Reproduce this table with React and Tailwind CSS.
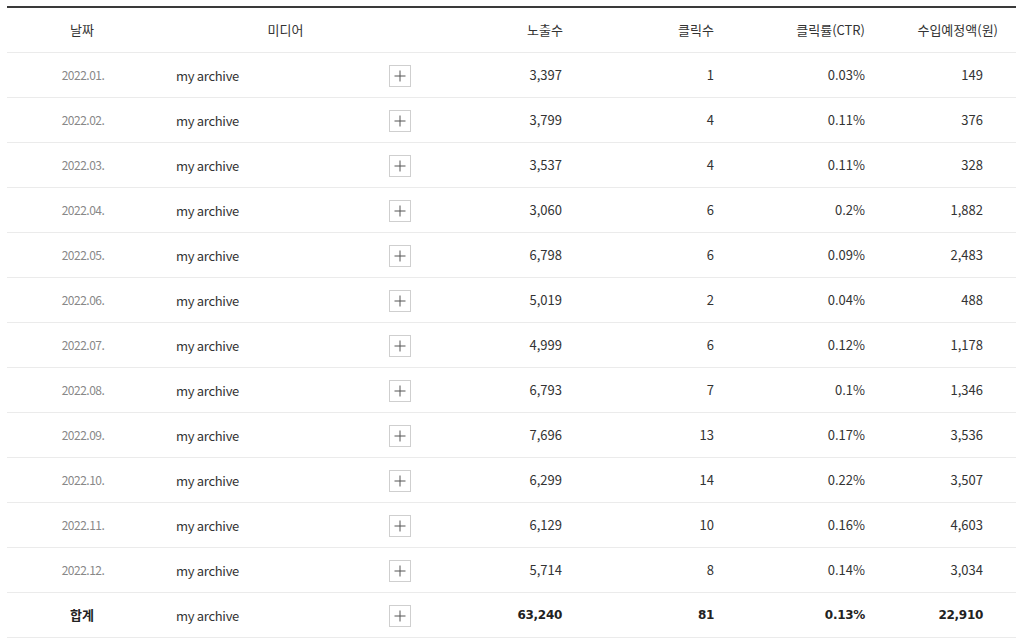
const rows = [
  ['2022.01.', '3,397', '1', '0.03%', '149'],
  ['2022.02.', '3,799', '4', '0.11%', '376'],
  ['2022.03.', '3,537', '4', '0.11%', '328'],
  ['2022.04.', '3,060', '6', '0.2%', '1,882'],
  ['2022.05.', '6,798', '6', '0.09%', '2,483'],
  ['2022.06.', '5,019', '2', '0.04%', '488'],
  ['2022.07.', '4,999', '6', '0.12%', '1,178'],
  ['2022.08.', '6,793', '7', '0.1%', '1,346'],
  ['2022.09.', '7,696', '13', '0.17%', '3,536'],
  ['2022.10.', '6,299', '14', '0.22%', '3,507'],
  ['2022.11.', '6,129', '10', '0.16%', '4,603'],
  ['2022.12.', '5,714', '8', '0.14%', '3,034'],
]

const grid = 'grid grid-cols-[150px_256px_164px_152px_151px_1fr] items-center'

function PlusBox() {
  return (
    <span className="w-[22px] h-[22px] border border-[#cfcfcf] bg-white flex items-center justify-center">
      <svg width="12" height="12" viewBox="0 0 12 12">
        <path d="M6 0.5V11.5M0.5 6H11.5" stroke="#555" strokeWidth="1" />
      </svg>
    </span>
  )
}

function Row({ date, imp, clk, ctr, rev, total }) {
  const num = total
    ? 'font-bold text-[12px] text-[#222] font-["DejaVu_Sans",sans-serif] tracking-[-0.3px]'
    : ''
  return (
    <div className={`${grid} h-[45px] border-b border-[#ebebeb]`}>
      <div className={`text-center ${total ? 'text-[#222] font-bold text-[13px]' : 'text-[#888] text-[12px] tracking-[-0.5px] pl-[2px]'}`}>{date}</div>
      <div className="flex items-center justify-between pl-[19px] pr-[2px] pt-[2px]">
        <span className="text-[#333] tracking-[-0.3px]">my archive</span>
        <PlusBox />
      </div>
      <div className={`text-right pr-[15px] ${num}`}>{imp}</div>
      <div className={`text-right pr-[15px] ${num}`}>{clk}</div>
      <div className={`text-right pr-[15px] ${num}`}>{ctr}</div>
      <div className={`text-right pr-[33px] ${num}`}>{rev}</div>
    </div>
  )
}

export default function App() {
  return (
    <div className="min-h-screen bg-white pt-[6px] pl-[7px] font-['Noto_Sans_CJK_KR',sans-serif] text-[13px] text-[#333]">
      <div className="w-[1009px] border-t-2 border-[#3a3a3a]">
        <div className={`${grid} h-[45px] border-b border-[#ebebeb] text-[#333]`}>
          <div className="text-center">날짜</div>
          <div className="text-center pl-[1px]">미디어</div>
          <div className="text-right pr-[14px]">노출수</div>
          <div className="text-right pr-[15px]">클릭수</div>
          <div className="text-right pr-[15px]">클릭률(CTR)</div>
          <div className="text-right pr-[18px]">수입예정액(원)</div>
        </div>
        {rows.map(r => (
          <Row key={r[0]} date={r[0]} imp={r[1]} clk={r[2]} ctr={r[3]} rev={r[4]} />
        ))}
        <Row total date="합계" imp="63,240" clk="81" ctr="0.13%" rev="22,910" />
      </div>
    </div>
  )
}
